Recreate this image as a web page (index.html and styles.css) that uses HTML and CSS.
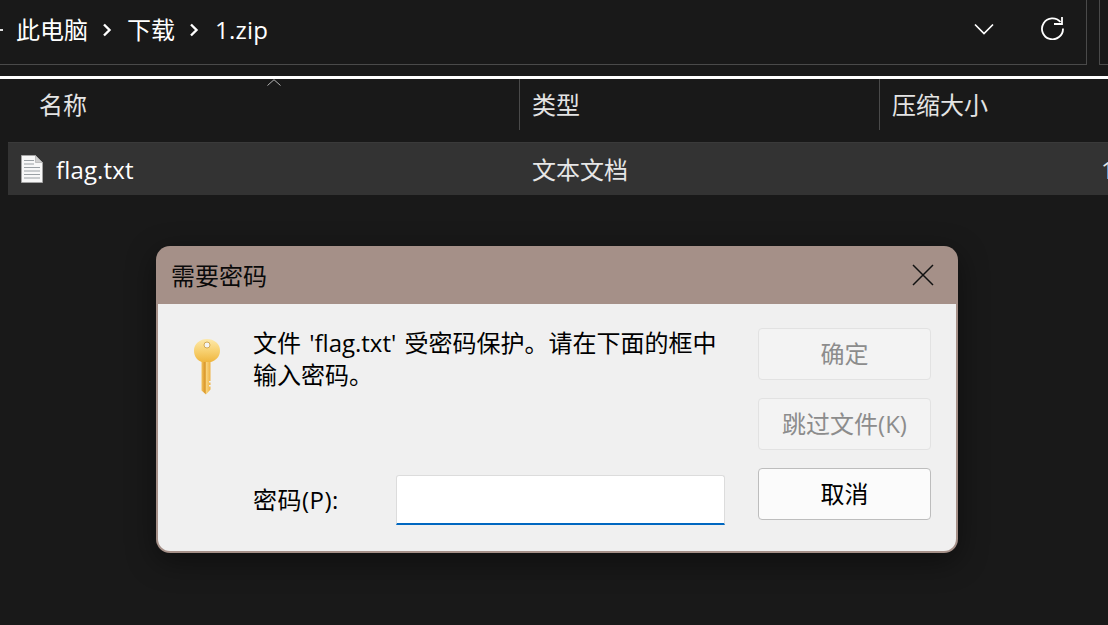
FILE: index.html
```html
<!DOCTYPE html>
<html lang="zh-CN">
<head>
<meta charset="utf-8">
<title>需要密码</title>
<link rel="stylesheet" href="styles.css">
</head>
<body>
<div class="explorer">
  <div class="toolbar">
    <div class="address">
      <span class="crumb-tail"></span>
      <span class="crumb">此电脑</span>
      <svg class="chev" width="10" height="14" viewBox="0 0 10 14"><path d="M2 1.500 7.500 7 2 12.500" fill="none" stroke="#fff" stroke-width="2.400"/></svg>
      <span class="crumb">下载</span>
      <svg class="chev" width="10" height="14" viewBox="0 0 10 14"><path d="M2 1.500 7.500 7 2 12.500" fill="none" stroke="#fff" stroke-width="2.400"/></svg>
      <span class="crumb crumb-last">1.zip</span>
      <span class="spacer"></span>
      <svg class="down" width="20" height="12" viewBox="0 0 20 12"><path d="M1 1.500 10 10.500 19 1.500" fill="none" stroke="#fff" stroke-width="1.700"/></svg>
      <svg class="refresh" width="24" height="24" viewBox="0 0 24 24"><path d="M20.500 6A10.500 10.500 0 1 0 23 12.500M22 1v7h-8" fill="none" stroke="#fff" stroke-width="1.800"/></svg>
    </div>
    <div class="search"></div>
  </div>
  <div class="rule"></div>
  <div class="head">
    <svg class="sort" width="14" height="7" viewBox="0 0 14 7"><path d="M.5 6.500 7 .7l6.500 5.800" fill="none" stroke="#b5b5b5" stroke-width="1"/></svg>
    <div class="col col-name">名称</div>
    <div class="col col-type">类型</div>
    <div class="col col-size">压缩大小</div>
  </div>
  <div class="row">
    <div class="cell-name">
      <svg class="file" width="22" height="28" viewBox="0 0 22 28">
        <path d="M.5.5h14l7 7v20H.5z" fill="#f8f8f8" stroke="#a4a4a4"/>
        <path d="M14.500.5v7h7z" fill="#cfcfcf" stroke="#a4a4a4" stroke-width=".6"/>
        <path d="M3 5.500h10M3 9h10M3 12.500h16M3 16h16M3 19.500h16M3 23h16" stroke="#9aa0a4" stroke-width="1"/>
      </svg>
      <span class="file-name">flag.txt</span>
    </div>
    <div class="cell-type">文本文档</div>
    <div class="cell-size">1</div>
  </div>
</div>

<section class="dialog">
  <header class="title">
    <span>需要密码</span>
    <svg class="close" width="22" height="22" viewBox="0 0 22 22"><path d="M1 1l20 20M21 1 1 21" fill="none" stroke="#111" stroke-width="1.500"/></svg>
  </header>
  <div class="body">
    <div class="main">
      <div class="message">
        <svg class="key" width="28" height="58" viewBox="0 0 28 58">
          <defs>
            <linearGradient id="head" x1="0" y1="0" x2="0" y2="1"><stop offset="0" stop-color="#fde9ab"/><stop offset=".55" stop-color="#f7cf6d"/><stop offset="1" stop-color="#efb63f"/></linearGradient>
            <linearGradient id="shaft" x1="0" y1="0" x2="1" y2="0"><stop offset="0" stop-color="#f3c25a"/><stop offset=".4" stop-color="#d9962a"/><stop offset=".55" stop-color="#f8d27a"/><stop offset="1" stop-color="#eeb244"/></linearGradient>
          </defs>
          <path d="M8.500 22h9v29.500l-4.500 5-4.500-4z" fill="url(#shaft)"/>
          <path d="M18 43h-2v1.500h2zM18 47h-2v1.500h2z" fill="#f0f0f0"/>
          <path d="M14 1a13 11.500 0 0 1 13 11.500c0 6-3.500 9.500-9 11.500H9C3.500 22 1 18 1 12.500A13 11.500 0 0 1 14 1z" fill="url(#head)"/>
          <circle cx="14" cy="7" r="3" fill="#f4f4f4" stroke="#c99a3c" stroke-width=".8"/>
        </svg>
        <p>文件 'flag.txt' 受密码保护。请在下面的框中输入密码。</p>
      </div>
      <div class="field">
        <label for="pw">密码(P):</label>
        <input id="pw" type="password">
      </div>
    </div>
    <div class="actions">
      <button class="btn" disabled>确定</button>
      <button class="btn" disabled>跳过文件(K)</button>
      <button class="btn active">取消</button>
    </div>
  </div>
</section>
</body>
</html>
```
FILE: styles.css
```css
* { box-sizing: border-box; }
html, body { margin: 0; height: 100%; }
body {
  width: 1108px;
  height: 625px;
  overflow: hidden;
  background: #191919;
  color: #fff;
  font: 24px/32px "Open Sans", "Noto Sans CJK SC", sans-serif;
  position: relative;
}
.explorer { display: flex; flex-direction: column; }
.toolbar { display: flex; height: 65px; }
.address {
  width: 1087px;
  display: flex;
  align-items: center;
  padding: 0 22px 4px 0;
  border-right: 1px solid #4a4a4a;
  border-bottom: 1px solid #4a4a4a;
}
.crumb-tail { width: 3px; height: 2px; background: #ddd; margin-right: 13px; }
.chev { margin: 0 15px 0 14px; }
.crumb-last { margin-left: 1px; letter-spacing: .2px; }
.spacer { flex: 1; }
.down { margin-right: 46px; margin-bottom: 3px; }
.refresh { margin-bottom: 4px; }
.search { margin-left: 12px; flex: 1; border-left: 1px solid #4a4a4a; border-bottom: 1px solid #4a4a4a; }
.rule { height: 3px; margin-top: 11px; background: #fff; }
.head { display: flex; height: 51px; position: relative; color: #e4e4e4; align-items: stretch; }
.sort { position: absolute; left: 267px; top: 0; }
.col { display: flex; align-items: center; padding-left: 12px; padding-top: 1px; }
.col-name { width: 520px; padding-left: 39px; border-right: 1px solid #4a4a4a; }
.col-type { width: 360px; border-right: 1px solid #4a4a4a; }
.row {
  display: flex;
  align-items: center;
  height: 53px;
  margin: 12px 0 0 8px;
  background: #333;
  border-top: 1px solid #3a3a3a;
  overflow: hidden;
}
.cell-name { width: 511px; display: flex; align-items: center; gap: 13px; padding-left: 13px; flex: none; }
.file-name { letter-spacing: .15px; padding-top: 2px; }
.cell-type { width: 582px; padding: 2px 0 0 13px; color: #e6e6e6; flex: none; }
.cell-size { padding-top: 2px; color: #e6e6e6; flex: none; }
.dialog {
  position: absolute;
  left: 156px;
  top: 246px;
  width: 802px;
  height: 307px;
  background: #a59088;
  border-radius: 14px;
  padding: 0 2px 2px;
  box-shadow: 0 8px 30px rgba(0, 0, 0, .45);
  color: #000;
  display: flex;
  flex-direction: column;
}
.title {
  height: 58px;
  flex: none;
  display: flex;
  align-items: center;
  justify-content: space-between;
  padding: 1px 22px 0 13px;
  color: #0a0a0a;
}
.close { margin-top: -2px; }
.body {
  flex: 1;
  background: #f0f0f0;
  border-radius: 0 0 12px 12px;
  display: flex;
  padding: 24px 25px 26px 0;
}
.main { flex: 1; display: flex; flex-direction: column; justify-content: space-between; }
.message { display: flex; padding-left: 35px; margin-top: -1px; }
.key { flex: none; margin-top: 11px; margin-right: 32px; }
.message p { margin: 0; width: 470px; font-size: 24px; line-height: 32px; word-spacing: 2px; }
.field { display: flex; align-items: center; padding-left: 95px; }
.field label { width: 143px; letter-spacing: .5px; padding-bottom: 1px; }
.field input {
  width: 329px;
  height: 50px;
  background: #fff;
  border: 1px solid #dcdcdc;
  border-bottom: 2px solid #0067c0;
  border-radius: 3px 3px 0 0;
  outline: 0;
}
.actions { width: 173px; flex: none; display: flex; flex-direction: column; gap: 18px; }
.btn {
  height: 52px;
  padding: 0;
  font: inherit;
  background: #fbfbfb;
  color: #000;
  border: 1px solid #bdbdbd;
  border-radius: 4px;
}
.btn:disabled { background: #f3f3f3; border-color: #e2e2e2; color: #8c8c8c; }
```
